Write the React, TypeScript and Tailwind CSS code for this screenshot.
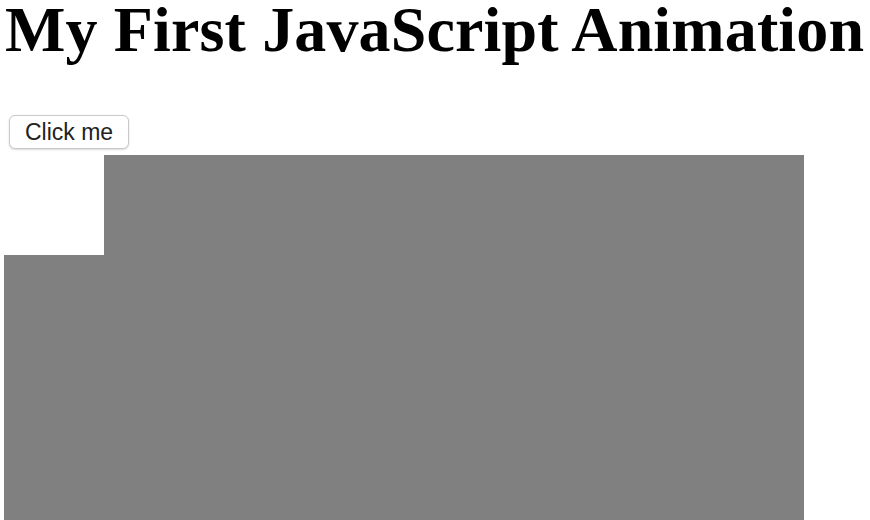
export default function App() {
  return (
    <div className="min-h-screen bg-white font-['Liberation_Serif',serif] text-black">
      <h1 className="pl-[5px] text-[64px] font-bold leading-[60px] tracking-[0.14px] whitespace-nowrap">
        My First JavaScript Animation
      </h1>

      <div className="mt-[55px] pl-[9px]">
        <button className="flex h-[34px] w-[120px] items-center justify-center rounded-[6px] border border-[#c9c9c9] bg-white font-['Liberation_Sans',sans-serif] text-[23px] leading-none text-[#222] shadow-[0_1px_2px_rgba(0,0,0,0.15)]">
          Click me
        </button>
      </div>

      <div className="ml-1 mt-[6px] h-[365px] w-[800px] bg-[#808080]">
        <div className="h-[100px] w-[100px] bg-white" />
      </div>
    </div>
  );
}
